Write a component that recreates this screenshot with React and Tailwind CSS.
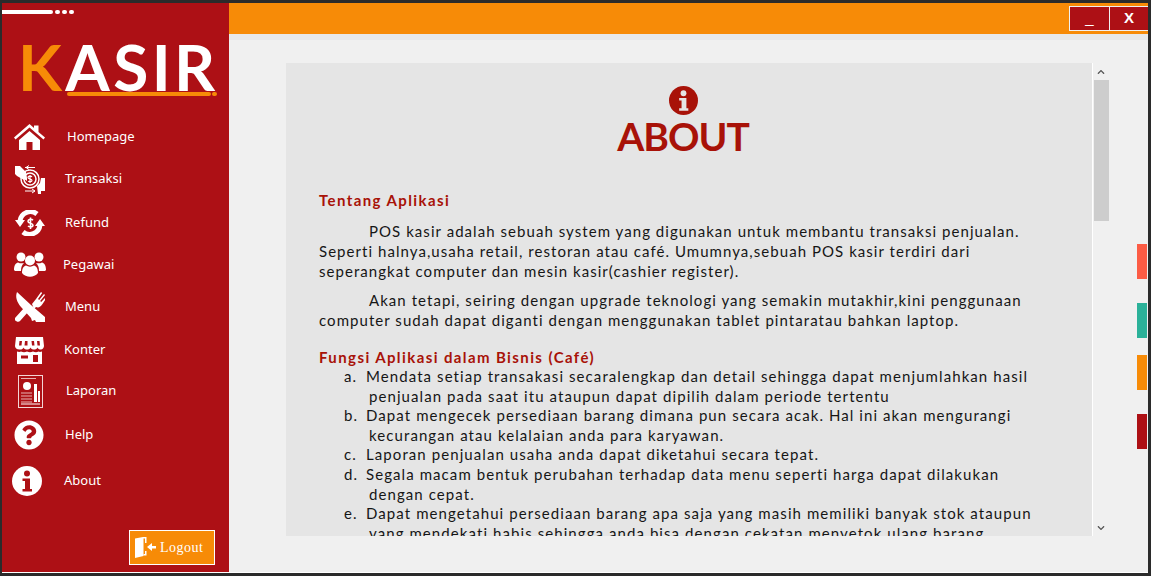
import { FaQuestionCircle, FaChevronUp, FaChevronDown } from 'react-icons/fa';

// ikon yang tidak ada di paket ikon
function HomeIcon() {
  return (
    <svg width="31" height="26" viewBox="0 0 31 26" fill="#fff">
      <path d="M0 13.500L15.500 0 20 4V1.500h4.500V8L31 13.500 29.500 15.500 15.500 3.500 1.500 15.500z" />
      <path d="M5 16L15.500 7 26 16v10h-7.500v-8h-6v8H5z" />
    </svg>
  );
}

function InfoIcon({ size = 30, fg = '#ad1015' }) {
  return (
    <svg width={size} height={size} viewBox="0 0 30 30">
      <circle cx="15" cy="15" r="15" fill="currentColor" />
      <circle cx="15" cy="7.500" r="3" fill={fg} />
      <path d="M10.500 12.500h7.500v10.500h2v2.500h-9.500V23h2.500v-8h-2.500z" fill={fg} />
    </svg>
  );
}

function PeopleIcon() {
  return (
    <svg width="32" height="25" viewBox="0 0 32 25" fill="#fff">
      <circle cx="7" cy="5" r="4.500" />
      <circle cx="25" cy="5" r="4.500" />
      <path d="M0 18c0-5 2-7 4-7.500 2 1 4 1 6 .5-2 2-3 4-3 8H1z" />
      <path d="M32 18c0-5-2-7-4-7.500-2 1-4 1-6 .5 2 2 3 4 3 8h6z" />
      <circle cx="16" cy="8.500" r="5" />
      <path d="M8 21c0-5 2-7 4-7.500 2.500 1.500 5.500 1.500 8 0 2 .5 4 2.500 4 7.500-4 5-12 5-16 0z" />
    </svg>
  );
}

function StoreIcon() {
  return (
    <svg width="29" height="27" viewBox="0 0 29 27" fill="#fff">
      <path d="M1 0h27l1 9c0 2-2 4-3.500 3.500-1 0-2.500-.5-3-2-.5 1.500-2 2-3.500 2s-3-.5-3.500-2c-.5 1.500-2 2-3.500 2s-3-.5-3.500-2c-.5 1.500-2 2-3 2C2 13 0 11 0 9z" />
      <path d="M4.500 4h2.500l-.5 4.500H4zM10 4h2.500v4.500H9.500zM16.500 4H19l.5 4.500H17zM22 4h2.500l.5 4.500h-2.500z" fill="#ad1015" />
      <path d="M2 14.500c1.500.5 3 .5 4 0 2 1 4 1 6 0 2 1 4 1 6 0 2 1 4 1 5.500 0 1 .5 2 .5 3.500 0V27H2zM6 18.500v3h7v-3zM18 18v7h5v-7z" fillRule="evenodd" />
    </svg>
  );
}

function TransaksiIcon() {
  return (
    <svg width="30" height="30" viewBox="0 0 30 30" fill="none">
      <path d="M0 2h5l6 6 1 6v3l-3-2v1L2 12 0 10z" fill="#fff" />
      <path d="M30 14v13h-4v3h-3l-1-8 3-3 1-5z" fill="#fff" />
      <circle cx="15" cy="15" r="9" stroke="#fff" strokeWidth="1.500" />
      <circle cx="15" cy="15" r="6" stroke="#fff" strokeWidth="1.500" />
      <path d="M17 12.800c-1-1-4-1-4 .7 0 2 4 1 4 3 0 1.500-3 1.500-4 .6M15 11v8" stroke="#fff" strokeWidth="1.200" />
      <path d="M10 3.500h10M14 1.500l-3 2 3 2M10 27h10M17 25l3 2-3 2" stroke="#fff" strokeWidth="1" />
    </svg>
  );
}

function RefundIcon() {
  return (
    <svg width="30" height="26" viewBox="0 0 30 26" fill="none">
      <path d="M5 11a10.500 10.500 0 0 1 17-7" stroke="#fff" strokeWidth="5" />
      <path d="M25 15a10.500 10.500 0 0 1-17 7" stroke="#fff" strokeWidth="5" />
      <path d="M0 10h10l-5 7zM30 16H20l5-7z" fill="#fff" />
      <path d="M18 10.200c-1.500-1.500-5-1-5 1 0 2.600 5 1.300 5 4 0 2-3.500 2.200-5 .8M15.500 7.500v11.500" stroke="#fff" strokeWidth="1.600" />
    </svg>
  );
}

function MenuIcon() {
  return (
    <svg width="30" height="30" viewBox="0 0 30 30" fill="#fff">
      <path d="M2 0l14 13 14 12v5H21l-1-2-3 1-1-3L6 15C2 10 0 5 2 0z" />
      <path d="M0 26l9-10 4 4-8 9c-2 2-7-1-5-3z" />
      <path d="M17 12l4-5 5-7 1.200 1-4.200 6 1.200 1 4.800-6 1 1-4.800 6 1 1 4.800-5 .5 1-4 6c-2 3-4 4-6.500 3l-2 2z" />
    </svg>
  );
}

function LaporanIcon() {
  return (
    <svg width="25" height="33" viewBox="0 0 25 33" fill="none">
      <rect x="0.500" y="0.500" width="24" height="32" stroke="#f3d5d5" />
      <path d="M3 3.500h15" stroke="#e8b4b4" />
      <circle cx="9" cy="11" r="4" fill="#fff" />
      <path d="M3 18h11M3 21h11M3 24h11M3 27h11" stroke="#e8b4b4" />
      <path d="M16 27V9h3v18zM20 27V16h2v11z" fill="#fff" />
      <path d="M3 29h19" stroke="#fff" />
    </svg>
  );
}

function DoorIcon() {
  return (
    <svg width="21" height="21" viewBox="0 0 21 21" fill="#fff">
      <path d="M0 1.500L8 0h3.500v6H10V1.500H8.500V19L0 21z" />
      <path d="M10 14h1.500v4.500H8.500V17H10z" />
      <path d="M12 10l5-4v3h4v2.500h-4V14z" />
    </svg>
  );
}

const menus = [
  { label: 'Homepage', icon: <HomeIcon />, row: 'h-[42px]', text: 'ml-[22px]', iconBox: 'ml-[11px]' },
  { label: 'Transaksi', icon: <TransaksiIcon />, row: 'h-[41px]', text: 'ml-[19px]', iconBox: 'ml-[12px]' },
  { label: 'Refund', icon: <RefundIcon />, row: 'h-[48px]', text: 'ml-[19px]', iconBox: 'ml-[12px]' },
  { label: 'Pegawai', icon: <PeopleIcon />, row: 'h-[35px]', text: 'ml-[17px]', iconBox: 'ml-[12px]' },
  { label: 'Menu', icon: <MenuIcon />, row: 'h-[50px]', text: 'ml-[19px]', iconBox: 'ml-[12px]' },
  { label: 'Konter', icon: <StoreIcon />, row: 'h-[36px]', text: 'ml-[19px]', iconBox: 'ml-[11px]' },
  { label: 'Laporan', icon: <LaporanIcon />, row: 'h-[46px]', text: 'ml-[20px]', iconBox: 'ml-[12px]' },
  { label: 'Help', icon: <FaQuestionCircle size={30} color="#fff" />, row: 'h-[42px]', text: 'ml-[20px]', iconBox: 'ml-[11px]' },
  { label: 'About', icon: <span className="text-white"><InfoIcon /></span>, row: 'h-[50px]', text: 'ml-[21px]', iconBox: 'ml-[9px]' },
];

const tentang1 = [
  'Seperti halnya,usaha retail, restoran atau café. Umumnya,sebuah POS kasir terdiri dari',
  'seperangkat computer dan mesin kasir(cashier register).',
];

const fungsi = [
  ['a.', 'Mendata setiap transakasi secaralengkap dan detail sehingga dapat menjumlahkan hasil', 'penjualan pada saat itu ataupun dapat dipilih dalam periode tertentu'],
  ['b.', 'Dapat mengecek persediaan barang dimana pun secara acak. Hal ini akan mengurangi', 'kecurangan atau kelalaian anda para karyawan.'],
  ['c.', 'Laporan penjualan usaha anda dapat diketahui secara tepat.'],
  ['d.', 'Segala macam bentuk perubahan terhadap data menu seperti harga dapat dilakukan', 'dengan cepat.'],
  ['e.', 'Dapat mengetahui persediaan barang apa saja yang masih memiliki banyak stok ataupun', 'yang mendekati habis sehingga anda bisa dengan cekatan menyetok ulang barang'],
];

export default function App() {
  return (
    <div className="w-[1151px] h-[576px] overflow-hidden bg-[#2b2b2b] pt-[3px] pl-[2px] pr-[3px] pb-[3px] font-['Lato',sans-serif]">
      <div className="flex h-full bg-white pb-[1px]">
        {/* Sidebar */}
        <aside className="w-[227px] h-full flex flex-col bg-[#ad1015] shrink-0">
          <div className="flex items-center gap-[1px] h-[4px] mt-[7px]">
            <div className="w-[51px] h-[4px] bg-white rounded-r-full mr-[1px]" />
            <div className="w-[5px] h-[4px] bg-white rounded-full" />
            <div className="w-[5px] h-[4px] bg-white rounded-full ml-[1px]" />
            <div className="w-[5px] h-[4px] bg-white rounded-full ml-[1px]" />
          </div>
          <div className="ml-[16px] mt-[22px] h-[58px] w-[205px] relative">
            <div className="text-[64px] leading-[62px] tracking-[3.4px] text-white whitespace-nowrap font-bold">
              <span className="text-[#f78b07]">K</span>ASIR
            </div>
            <div className="absolute left-[49px] top-[56px] flex items-center gap-[1px]">
              <div className="w-[144px] h-[4px] rounded-full bg-[#f78b07]" />
              <div className="w-[5px] h-[4px] rounded-full bg-[#f78b07]" />
            </div>
          </div>
          <nav className="mt-[22px] flex flex-col">
            {menus.map(m => (
              <div key={m.label} className={`flex items-center ${m.row}`}>
                <div className={`w-[32px] flex justify-center shrink-0 ${m.iconBox}`}>{m.icon}</div>
                <span className={`text-[13px] text-white font-['Noto_Sans',sans-serif] ${m.text}`}>{m.label}</span>
              </div>
            ))}
          </nav>
          <div className="mt-auto mb-[7px] mr-[14px] self-end w-[86px] h-[35px] bg-[#f78b07] border border-white flex items-center pl-[5px] gap-[4px]">
            <DoorIcon />
            <span className="text-[14px] text-white font-['Liberation_Serif',serif] tracking-[0.5px]">Logout</span>
          </div>
        </aside>

        {/* Main */}
        <main className="flex-1 min-w-0 flex flex-col bg-[#f0f0f0]">
          <header className="h-[31px] bg-[#f78b07] flex justify-end shrink-0">
            <div className="flex h-[25px] mt-[3px] w-[79px] border border-[#f0f0f0] border-r-0 bg-[#f0f0f0] gap-[1px]">
              <button className="w-[39px] h-full bg-[#ad1015] text-white text-[15px] flex items-center justify-center font-['Liberation_Sans',sans-serif]">_</button>
              <button className="flex-1 h-full bg-[#ad1015] text-white text-[15px] font-bold flex items-center justify-center font-['Liberation_Sans',sans-serif]">X</button>
            </div>
          </header>
          <div className="h-[6px] bg-[#e8e8e8] shrink-0" />

          <div className="flex-1 min-h-0 flex pl-[57px] pt-[23px] pb-[35px]">
            {/* Panel */}
            <div className="w-[806px] h-[473px] overflow-hidden bg-[#e5e5e5] text-[#161616] text-[15px] leading-[20px] tracking-[1.05px] whitespace-nowrap pl-[33px]">
              <div className="flex flex-col items-center -ml-[33px] pr-[12px] pt-[23px] text-[#a81208]">
                <InfoIcon size={29} fg="#e5e5e5" />
                <h1 className="text-[39px] leading-[36px] font-bold tracking-[-1px] mt-[3px]">ABOUT</h1>
              </div>
              <h2 className="mt-[36px] text-[#a81208] font-bold text-[15px] tracking-[1.4px]">Tentang Aplikasi</h2>
              <p className="mt-[11px] pl-[50px]">POS kasir adalah sebuah system yang digunakan untuk membantu transaksi penjualan.</p>
              {tentang1.map(l => <p key={l}>{l}</p>)}
              <p className="mt-[9px] pl-[50px]">Akan tetapi, seiring dengan upgrade teknologi yang semakin mutakhir,kini penggunaan</p>
              <p>computer sudah dapat diganti dengan menggunakan tablet pintaratau bahkan laptop.</p>
              <h2 className="mt-[17px] text-[#a81208] font-bold text-[15px] tracking-[1.4px]">Fungsi Aplikasi dalam Bisnis (Café)</h2>
              <div className="pl-[25px] leading-[19.6px] tracking-[1.08px]">
                {fungsi.map(([n, a, b]) => (
                  <div key={n}>
                    <div className="flex">
                      <span className="w-[22px] shrink-0">{n}</span>
                      <span>{a}</span>
                    </div>
                    {b && <div className="pl-[25px]">{b}</div>}
                  </div>
                ))}
              </div>
            </div>

            {/* Scrollbar */}
            <div className="w-[17px] h-[473px] flex flex-col items-center bg-[#f0f0f0] border-l border-white shrink-0">
              <div className="h-[17px] flex items-center justify-center"><FaChevronUp size={8} color="#555" /></div>
              <div className="w-[15px] h-[141px] bg-[#cdcdcd]" />
              <div className="mt-auto h-[17px] flex items-center justify-center"><FaChevronDown size={8} color="#555" /></div>
            </div>

            {/* Penanda warna */}
            <div className="ml-[28px] w-[10px] flex flex-col shrink-0 pt-[181px] mr-[1px]">
              <div className="h-[35px] bg-[#fc5c45]" />
              <div className="h-[35px] mt-[24px] bg-[#2bb199]" />
              <div className="h-[35px] mt-[17px] bg-[#f78b07]" />
              <div className="h-[35px] mt-[24px] bg-[#ad1015]" />
            </div>
          </div>
        </main>
      </div>
    </div>
  );
}
